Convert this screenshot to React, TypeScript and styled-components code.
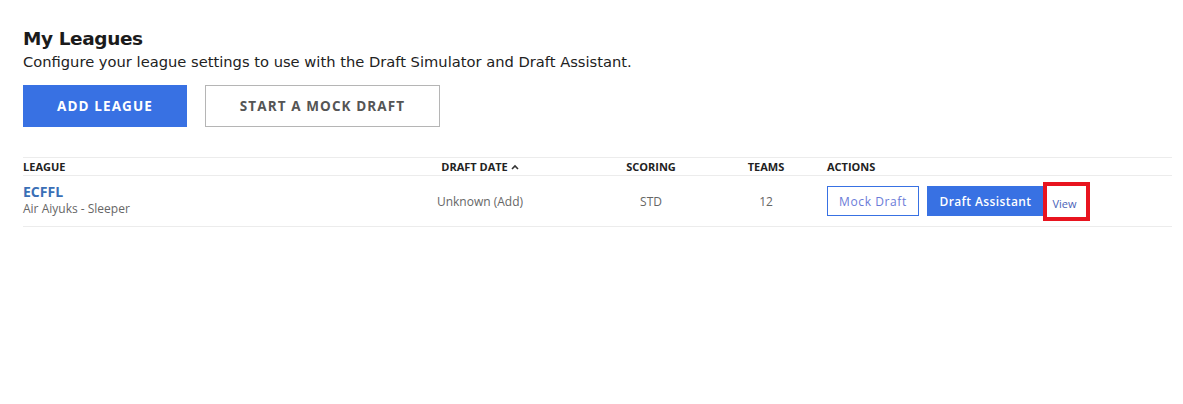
import styled, { createGlobalStyle } from 'styled-components';

const GlobalStyle = createGlobalStyle`
  body {
    margin: 0;
    background: #fff;
    font-family: "Open Sans", "Liberation Sans", sans-serif;
  }
`;

const Page = styled.div`
  padding: 26px 11px 0 23px;
`;

const Title = styled.h1`
  margin: 0;
  font-family: "DejaVu Sans", "Liberation Sans", sans-serif;
  font-size: 18.5px;
  font-weight: 700;
  line-height: 26px;
  color: #1b1b1b;
  letter-spacing: -0.4px;
`;

const Subtitle = styled.p`
  margin: 0;
  font-family: "DejaVu Sans", "Liberation Sans", sans-serif;
  font-size: 14.7px;
  line-height: 20px;
  color: #222;
`;

const ButtonRow = styled.div`
  display: flex;
  gap: 18px;
  margin-top: 13px;
`;

const BigButton = styled.button<{ $primary?: boolean }>`
  height: 42px;
  padding: 0;
  width: ${(p) => (p.$primary ? '164px' : '235px')};
  font-family: "Open Sans", sans-serif;
  font-size: 13.5px;
  font-weight: 700;
  letter-spacing: 1.1px;
  text-transform: uppercase;
  cursor: pointer;
  color: ${(p) => (p.$primary ? '#fff' : '#555')};
  background: ${(p) => (p.$primary ? '#3871e3' : '#fff')};
  border: ${(p) => (p.$primary ? 'none' : '1px solid #b5b5b5')};
`;

const Table = styled.div`
  margin-top: 30px;
  border-top: 1px solid #ececec;
`;

const Row = styled.div<{ $head?: boolean }>`
  display: grid;
  grid-template-columns: 362px 190px 152px 78px 1fr;
  align-items: center;
  height: ${(p) => (p.$head ? '17px' : '50px')};
  border-bottom: 1px solid #ececec;
`;

const HeadCell = styled.div<{ $center?: boolean; $pad?: boolean }>`
  font-size: 11px;
  font-weight: 700;
  color: #222;
  text-transform: uppercase;
  padding-left: ${(p) => (p.$pad ? '22px' : '0')};
  display: flex;
  align-items: center;
  justify-content: ${(p) => (p.$center ? 'center' : 'flex-start')};
  gap: 3px;
`;

const Cell = styled.div<{ $center?: boolean }>`
  font-size: 12px;
  color: #666;
  text-align: ${(p) => (p.$center ? 'center' : 'left')};
`;

const LeagueCell = styled.div`
  padding-bottom: 3px;
`;

const LeagueName = styled.a`
  display: block;
  font-size: 14px;
  font-weight: 700;
  color: #3a6fb6;
  line-height: 18px;
  text-decoration: none;
`;

const LeagueSub = styled.div`
  font-size: 12px;
  color: #666;
  line-height: 16px;
`;

const Actions = styled.div`
  display: flex;
  align-items: center;
  padding-left: 22px;
`;

const SmallButton = styled.button<{ $primary?: boolean }>`
  height: 30px;
  padding: 0;
  white-space: nowrap;
  font-family: "Open Sans", sans-serif;
  font-size: 12px;
  letter-spacing: ${(p) => (p.$primary ? '0.4px' : '0.6px')};
  cursor: pointer;
  margin-right: ${(p) => (p.$primary ? '0' : '8px')};
  width: ${(p) => (p.$primary ? '117px' : '92px')};
  color: ${(p) => (p.$primary ? '#fff' : '#6a7bd8')};
  background: ${(p) => (p.$primary ? '#3871e3' : '#fff')};
  border: 1px solid #3871e3;
  font-weight: ${(p) => (p.$primary ? 600 : 400)};
`;

const ViewBox = styled.a`
  display: flex;
  align-items: center;
  justify-content: center;
  box-sizing: border-box;
  width: 47px;
  height: 39px;
  margin-left: -1px;
  border: 4px solid #e8141f;
  font-size: 11px;
  color: #4a62b8;
  text-decoration: none;
  padding: 4px 4px 0 0;
`;

export default function App() {
  return (
    <Page>
      <GlobalStyle />
      <Title>My Leagues</Title>
      <Subtitle>Configure your league settings to use with the Draft Simulator and Draft Assistant.</Subtitle>
      <ButtonRow>
        <BigButton $primary>Add League</BigButton>
        <BigButton>Start a Mock Draft</BigButton>
      </ButtonRow>
      <Table>
        <Row $head>
          <HeadCell>League</HeadCell>
          <HeadCell $center>
            Draft Date
            <svg width="8" height="6" viewBox="0 0 8 6">
              <path d="M1 5 L4 2 L7 5" stroke="#333" strokeWidth="1.6" fill="none" />
            </svg>
          </HeadCell>
          <HeadCell $center>Scoring</HeadCell>
          <HeadCell $center>Teams</HeadCell>
          <HeadCell $pad>Actions</HeadCell>
        </Row>
        <Row>
          <LeagueCell>
            <LeagueName>ECFFL</LeagueName>
            <LeagueSub>Air Aiyuks - Sleeper</LeagueSub>
          </LeagueCell>
          <Cell $center>Unknown (Add)</Cell>
          <Cell $center>STD</Cell>
          <Cell $center>12</Cell>
          <Actions>
            <SmallButton>Mock Draft</SmallButton>
            <SmallButton $primary>Draft Assistant</SmallButton>
            <ViewBox>View</ViewBox>
          </Actions>
        </Row>
      </Table>
    </Page>
  );
}
